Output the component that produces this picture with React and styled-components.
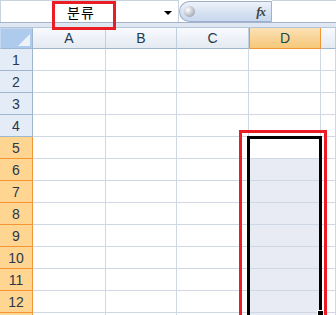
import styled, { createGlobalStyle, css } from "styled-components";

const GlobalStyle = createGlobalStyle`
    body {
        margin: 0;
        background: #fff;
        font-family: "Liberation Sans", "Noto Sans", sans-serif;
        overflow: hidden;
    }
`

const Page = styled.div`
    position: relative;
    width: 336px;
    height: 315px;
    overflow: hidden;
    background: #fff;
`
const FormulaBar = styled.div`
    display: flex;
    height: 23px;
    box-sizing: border-box;
    border-bottom: 1px solid #a3b5cc;
`
const NameBox = styled.div`
    display: flex;
    align-items: center;
    width: 179px;
    box-sizing: border-box;
    border: 1px solid #c9d3e0;
    border-bottom: none;
    padding-left: 66px;
    padding-right: 6px;
`
const NameText = styled.span`
    flex: 1;
    font-family: "Noto Sans CJK KR", "Noto Sans", sans-serif;
    font-size: 14px;
    letter-spacing: 1px;
    color: #000;
    line-height: 1;
`
const Arrow = styled.span`
    width: 0;
    height: 0;
    border-left: 4px solid transparent;
    border-right: 4px solid transparent;
    border-top: 4px solid #000;
    margin-top: 2px;
`
const FxPill = styled.div`
    display: flex;
    align-items: center;
    justify-content: space-between;
    width: 93px;
    margin-top: 1px;
    box-sizing: border-box;
    border: 1px solid #9cb0ca;
    border-right: 1px solid #a0b2ca;
    border-radius: 11px 0 0 11px;
    background: linear-gradient(#eef3fa, #d6e2f2 55%, #c9d8ee);
    padding: 0 6px 0 4px;
`
const Knob = styled.span`
    width: 11px;
    height: 11px;
    border-radius: 50%;
    background: radial-gradient(circle at 35% 35%, #ffffff, #b7bcc4 60%, #8d949e);
`
const Fx = styled.span`
    font-family: "Liberation Serif", serif;
    font-style: italic;
    font-weight: bold;
    font-size: 13px;
    color: #444;
    letter-spacing: -1px;
`
const FormulaInput = styled.div`
    flex: 1;
    border-top: 1px solid #c9d3e0;
    background: #fff;
`
const Band = styled.div`
    height: 4px;
    background: #dfe7f2;
    border-bottom: 1px solid #b5c5d9;
`
const Grid = styled.div`
    display: grid;
    grid-template-columns: 33px 73px 71px 72px 72px 15px;
    grid-template-rows: 21px repeat(13, 22px);
`
const Corner = styled.div`
    position: relative;
    box-sizing: border-box;
    background: #aecaec;
    border: 1px solid #c5d8f0;
    border-right-color: #9eb6ce;
    border-bottom-color: #9eb6ce;
    &::after {
        content: "";
        position: absolute;
        right: 2px;
        bottom: 2px;
        width: 0;
        height: 0;
        border-left: 12px solid transparent;
        border-bottom: 12px solid #eef3fa;
    }
`
const ColHead = styled.div`
    display: flex;
    align-items: center;
    justify-content: center;
    box-sizing: border-box;
    font-size: 14px;
    color: #27384d;
    background: linear-gradient(#f8fafd, #e4eaf3);
    border-right: 1px solid #c0cfe0;
    border-bottom: 1px solid #9eb6ce;
    ${(p) => p.$active && css`
        background: linear-gradient(#fbe2b6, #f8d191 60%, #f6c878);
        border-right-color: #f29536;
        border-left: 1px solid #f29536;
        border-bottom-color: #f29536;
        color: #1c4a4a;
    `}
`
const RowHead = styled.div`
    display: flex;
    align-items: center;
    justify-content: center;
    box-sizing: border-box;
    font-size: 14px;
    color: #27384d;
    background: #e4ecf7;
    border-right: 1px solid #9eb6ce;
    border-bottom: 1px solid #9eb6ce;
    ${(p) => p.$active && css`
        background: #ffd592;
        border-right-color: #f29536;
        border-bottom-color: #f29536;
    `}
`
const Cell = styled.div`
    box-sizing: border-box;
    background: ${(p) => (p.$picked ? "#e8eaf4" : "#fff")};
    border-right: 1px solid #d0d7e5;
    border-bottom: 1px solid #d0d7e5;
`
const Selection = styled.div`
    position: absolute;
    left: 247px;
    top: 136px;
    width: 75px;
    height: 182px;
    box-sizing: border-box;
    border: 3px solid #000;
`
const Handle = styled.span`
    position: absolute;
    left: 317px;
    top: 310px;
    width: 5px;
    height: 5px;
    background: #000;
    border-left: 1px solid #fff;
    border-top: 1px solid #fff;
`
const Mark = styled.div`
    position: absolute;
    box-sizing: border-box;
    border: 3px solid #ea1c24;
`

const columns = ["A", "B", "C", "D", ""];
const rows = Array.from({ length: 13 }, (_, i) => i + 1);

const App = () => {
    return (
        <Page>
            <GlobalStyle />
            <FormulaBar>
                <NameBox>
                    <NameText>분류</NameText>
                    <Arrow />
                </NameBox>
                <FxPill>
                    <Knob />
                    <Fx>fx</Fx>
                </FxPill>
                <FormulaInput />
            </FormulaBar>
            <Band />
            <Grid>
                <Corner />
                {columns.map((c, i) => (
                    <ColHead key={i} $active={c === "D"}>{c}</ColHead>
                ))}
                {rows.map((r) => [
                    <RowHead key={`h${r}`} $active={r >= 5}>{r <= 12 ? r : ""}</RowHead>,
                    ...columns.map((c, i) => (
                        <Cell key={`${r}-${i}`} $picked={c === "D" && r >= 6} />
                    )),
                ])}
            </Grid>
            <Selection />
            <Handle />
            <Mark style={{ left: 52, top: 1, width: 64, height: 29 }} />
            <Mark style={{ left: 239, top: 130, width: 88, height: 200 }} />
        </Page>
    )
}

export default App;
